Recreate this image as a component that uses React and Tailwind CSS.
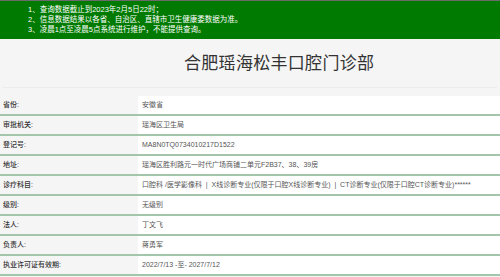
import React from 'react';

const rows = [
  { label: '省份:', value: '安徽省' },
  { label: '审批机关:', value: '瑶海区卫生局' },
  { label: '登记号:', value: 'MA8N0TQ0734010217D1522' },
  { label: '地址:', value: '瑶海区胜利路元一时代广场商铺二单元F2B37、38、39房' },
  { label: '诊疗科目:', value: '口腔科 /医学影像科  |  X线诊断专业(仅限于口腔X线诊断专业)  |  CT诊断专业(仅限于口腔CT诊断专业)******' },
  { label: '级别:', value: '无级别' },
  { label: '法人:', value: '丁文飞' },
  { label: '负责人:', value: '蒋勇军' },
  { label: '执业许可证有效期:', value: '2022/7/13 -至- 2027/7/12' },
];

const notices = [
  '1、查询数据截止到2023年2月5日22时；',
  '2、信息数据结果以各省、自治区、直辖市卫生健康委数据为准。',
  '3、凌晨1点至凌晨5点系统进行维护，不能提供查询。',
];

export default function App() {
  return (
    <div
      className="w-[500px] h-[277px] overflow-hidden bg-[#f5f5f5]"
      style={{ fontFamily: '"Liberation Sans", "Noto Sans CJK SC", sans-serif' }}
    >
      <div className="border-t border-[#6b6b6b] bg-[#007a00] h-[39px] pl-[28px] pt-[4px]">
        {notices.map((n) => (
          <p key={n} className="text-[7.5px] leading-[10px] text-white">{n}</p>
        ))}
      </div>

      <div className="mx-[3px] border-b border-[#ebebeb] h-[49px] flex items-center pl-[181px]">
        <h1 className="text-[17px] leading-none text-[#333] tracking-[0.3px]">合肥瑶海松丰口腔门诊部</h1>
      </div>

      <div className="mt-[8px]">
        {rows.map((r) => (
          <div key={r.label} className="flex h-[20px] border-b-2 border-[#a2c6ab]">
            <div className="w-[138px] pl-[3px] flex items-center text-[7px] font-medium text-[#333]">{r.label}</div>
            <div className="flex-1 bg-white pl-[4px] flex items-center text-[7px] text-[#555] whitespace-pre">{r.value}</div>
          </div>
        ))}
      </div>
    </div>
  );
}
